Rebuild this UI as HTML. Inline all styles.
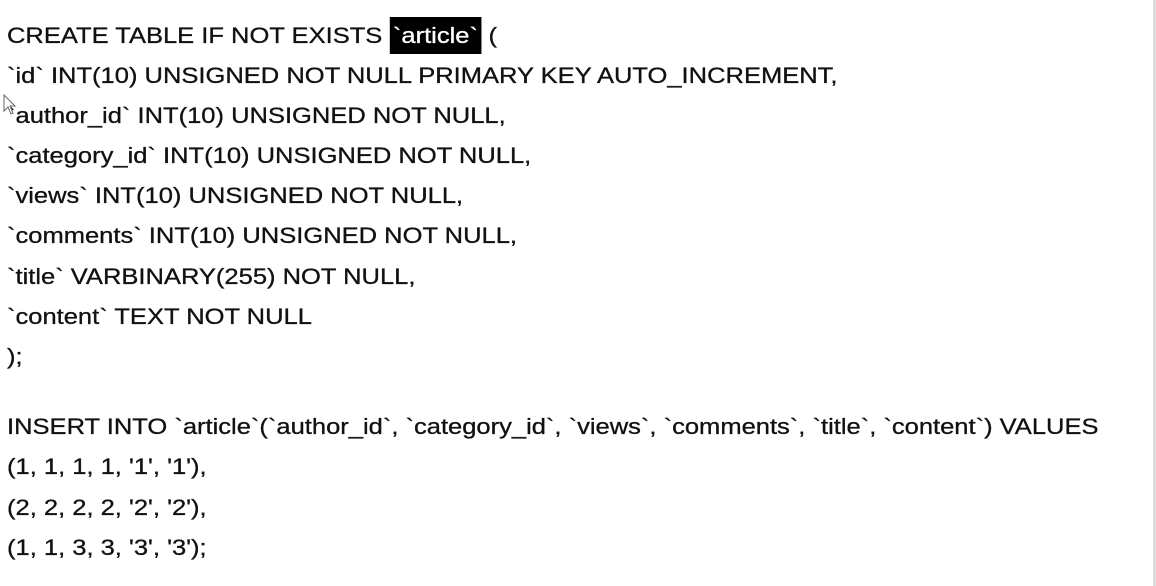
<!DOCTYPE html>
<html><head><meta charset="utf-8"><style>
html,body{margin:0;padding:0;background:#fff;width:1156px;height:586px;overflow:hidden}
body{font-family:"Liberation Sans",Arial,sans-serif;font-size:22px;color:#111;position:relative}
.l{position:absolute;left:7px;white-space:pre;line-height:26px;transform:scaleX(1.16);transform-origin:0 0;-webkit-text-stroke:0.3px #111}
.hl{background:#000;color:#fff;-webkit-text-stroke:0.3px #fff;padding:6px 3px 6px 3px}
.cur{position:absolute;left:3px;top:94px}
.edge{position:absolute;right:0;top:0;width:3px;height:586px;background:#ddd}
</style></head><body>
<div class="l" style="top:23px">CREATE TABLE IF NOT EXISTS <span class="hl">`article`</span> (</div>
<div class="l" style="top:63px">`id` INT(10) UNSIGNED NOT NULL PRIMARY KEY AUTO_INCREMENT,</div>
<div class="l" style="top:103px">`author_id` INT(10) UNSIGNED NOT NULL,</div>
<div class="l" style="top:143px">`category_id` INT(10) UNSIGNED NOT NULL,</div>
<div class="l" style="top:183px">`views` INT(10) UNSIGNED NOT NULL,</div>
<div class="l" style="top:223px">`comments` INT(10) UNSIGNED NOT NULL,</div>
<div class="l" style="top:264px">`title` VARBINARY(255) NOT NULL,</div>
<div class="l" style="top:304px">`content` TEXT NOT NULL</div>
<div class="l" style="top:344px">);</div>
<div class="l" style="top:414px">INSERT INTO `article`(`author_id`, `category_id`, `views`, `comments`, `title`, `content`) VALUES</div>
<div class="l" style="top:454px">(1, 1, 1, 1, '1', '1'),</div>
<div class="l" style="top:495px">(2, 2, 2, 2, '2', '2'),</div>
<div class="l" style="top:535px">(1, 1, 3, 3, '3', '3');</div>
<svg class="cur" width="14" height="22" viewBox="0 0 14 22"><path d="M1 1 L1 17 L5 13 L8 20 L10 19 L7 12 L12 12 Z" fill="#fff" stroke="#666" stroke-width="1"/></svg>
<div class="edge"></div>
</body></html>
